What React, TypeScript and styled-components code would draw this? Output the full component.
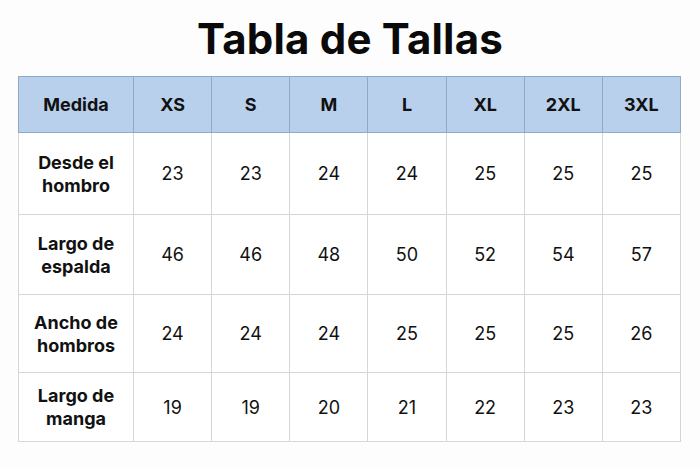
import React from 'react';
import styled, { createGlobalStyle } from 'styled-components';

const sizes = ['XS', 'S', 'M', 'L', 'XL', '2XL', '3XL'];

const rows = [
  { label: ['Desde el', 'hombro'], values: [23, 23, 24, 24, 25, 25, 25], height: 82 },
  { label: ['Largo de', 'espalda'], values: [46, 46, 48, 50, 52, 54, 57], height: 80 },
  { label: ['Ancho de', 'hombros'], values: [24, 24, 24, 25, 25, 25, 26], height: 78 },
  { label: ['Largo de', 'manga'], values: [19, 19, 20, 21, 22, 23, 23], height: 69 },
];

function App() {
  return (
    <Page>
      <GlobalStyle />
      <Title>Tabla de Tallas</Title>
      <Table>
        <colgroup>
          <col style={{ width: 115 }} />
          {sizes.map((s) => (
            <col key={s} />
          ))}
        </colgroup>
        <thead>
          <tr>
            <HeadCell>Medida</HeadCell>
            {sizes.map((s) => (
              <HeadCell key={s}>{s}</HeadCell>
            ))}
          </tr>
        </thead>
        <tbody>
          {rows.map((r) => (
            <Row key={r.label.join(' ')} $height={r.height}>
              <LabelCell>
                {r.label[0]}
                <br />
                {r.label[1]}
              </LabelCell>
              {r.values.map((v, i) => (
                <Cell key={i}>{v}</Cell>
              ))}
            </Row>
          ))}
        </tbody>
      </Table>
    </Page>
  );
}

export default App;

const GlobalStyle = createGlobalStyle`
  body {
    margin: 0;
    background: #fdfdfd;
    font-family: Inter, "Noto Sans", sans-serif;
    color: #111;
  }
`;

const Page = styled.div`
  width: 700px;
  height: 467px;
  padding: 13px 18px 0 18px;
  box-sizing: border-box;
`;

const Title = styled.h1`
  margin: 0 0 11px;
  text-align: center;
  font-size: 42px;
  font-weight: 700;
  line-height: 52px;
  letter-spacing: 0.2px;
  color: #0a0a0a;
`;

const Table = styled.table`
  width: 663px;
  border-collapse: collapse;
  table-layout: fixed;
  font-size: 18px;
  text-align: center;
`;

const HeadCell = styled.th`
  height: 55px;
  padding: 0;
  background: #b9d0ed;
  border: 1px solid #8fa9c9;
  font-weight: 700;
  color: #111;
`;

const Row = styled.tr<{ $height: number }>`
  height: ${(p) => p.$height}px;
`;

const Cell = styled.td`
  padding: 0;
  border: 1px solid #d6d6d6;
  font-weight: 400;
  background: #fff;
`;

const LabelCell = styled(Cell)`
  font-weight: 700;
  line-height: 23px;
`;
